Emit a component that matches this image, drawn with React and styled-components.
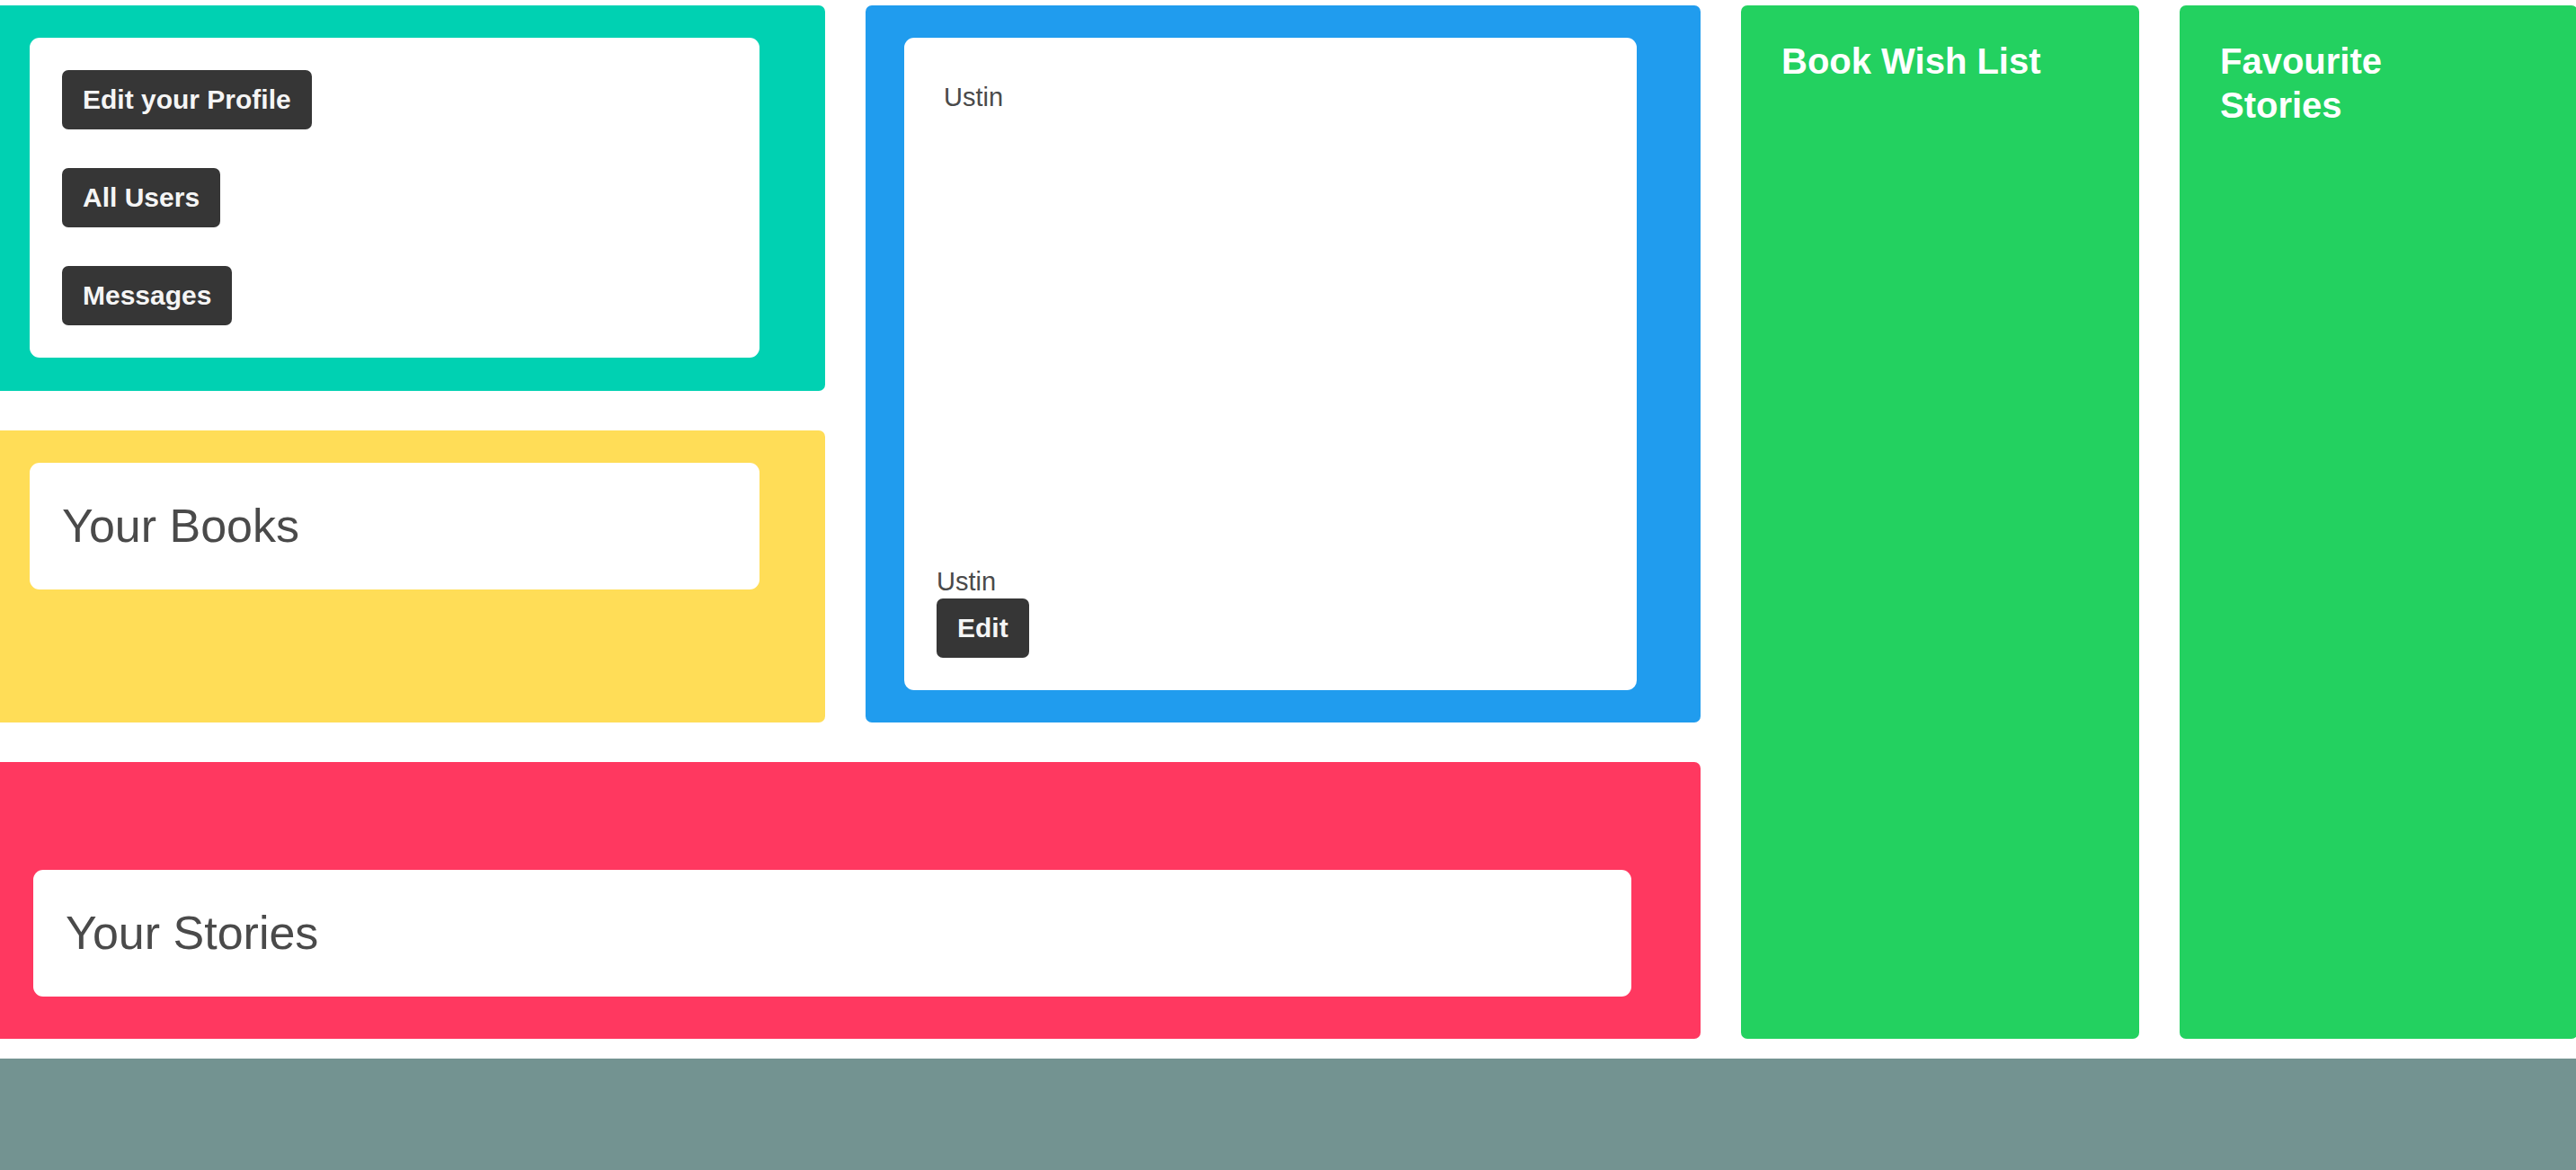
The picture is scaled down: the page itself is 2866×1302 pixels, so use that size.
import React from "react";
import styled, { createGlobalStyle } from "styled-components";

const GlobalStyle = createGlobalStyle`
  html, body {
    margin: 0;
    padding: 0;
    background: #ffffff;
    overflow: hidden;
  }
  body {
    font-family: "Liberation Sans", Arial, sans-serif;
    color: #4a4a4a;
  }
`;

const tones = {
  primary: "#00d1b2",
  warning: "#ffdd57",
  info: "#209cee",
  danger: "#ff3860",
  success: "#23d160",
};

function App() {
  return (
    <>
      <GlobalStyle />
      <Page>
        <Board>
          <Tile tone="primary" area="menu" pad="36px 73px 37px 44px">
            <Box>
              <ButtonStack>
                <DarkButton>Edit your Profile</DarkButton>
                <DarkButton>All Users</DarkButton>
                <DarkButton>Messages</DarkButton>
              </ButtonStack>
            </Box>
          </Tile>

          <Tile tone="warning" area="books" pad="36px 73px 37px 44px">
            <Box>
              <Heading>Your Books</Heading>
            </Box>
          </Tile>

          <Tile tone="info" area="profile" pad="36px 71px 36px 43px">
            <ProfileBox>
              <Avatar>Ustin</Avatar>
              <div>
                <Name>Ustin</Name>
                <DarkButton>Edit</DarkButton>
              </div>
            </ProfileBox>
          </Tile>

          <Tile tone="danger" area="stories" pad="120px 77px 47px 48px">
            <Box>
              <Heading>Your Stories</Heading>
            </Box>
          </Tile>

          <Tile tone="success" area="wish" pad="38px 45px">
            <TileTitle>Book Wish List</TileTitle>
          </Tile>

          <Tile tone="success" area="favs" pad="38px 45px">
            <TileTitle>Favourite Stories</TileTitle>
          </Tile>
        </Board>
        <Footer />
      </Page>
    </>
  );
}

const Page = styled.div`
  width: 100%;
  padding-top: 6px;
`;

const Board = styled.div`
  display: grid;
  margin-left: -11px;
  grid-template-columns: 929px 929px 443px 443px;
  grid-template-rows: 429px 325px 308px;
  column-gap: 45px;
  row-gap: 44px;
  grid-template-areas:
    "menu    profile wish favs"
    "books   profile wish favs"
    "stories stories wish favs";
`;

const Tile = styled.div`
  grid-area: ${(p) => p.area};
  background: ${(p) => tones[p.tone]};
  border-radius: 7px;
  padding: ${(p) => p.pad};
  display: flex;
  flex-direction: column;
  align-items: stretch;
  box-sizing: border-box;
  min-width: 0;
`;

const Box = styled.div`
  background: #ffffff;
  border-radius: 11px;
  padding: 36px;
  color: #4a4a4a;
`;

const ProfileBox = styled(Box)`
  flex: 1;
  display: flex;
  flex-direction: column;
  justify-content: space-between;
`;

const ButtonStack = styled.div`
  display: flex;
  flex-direction: column;
  align-items: flex-start;
  gap: 43px;
`;

const DarkButton = styled.button`
  display: inline-flex;
  align-items: center;
  justify-content: center;
  height: 66px;
  padding: 0 22px;
  border: 1px solid transparent;
  border-radius: 7px;
  background: #363636;
  color: #f5f5f5;
  font-family: "Liberation Sans", Arial, sans-serif;
  font-size: 30px;
  font-weight: 700;
  cursor: pointer;
`;

const Heading = styled.h2`
  margin: 0;
  font-size: 52px;
  font-weight: 400;
  line-height: 69px;
  color: #4a4a4a;
`;

const Avatar = styled.div`
  margin: 14px 0 0 8px;
  font-size: 29px;
  line-height: 33px;
`;

const Name = styled.div`
  font-size: 29px;
  line-height: 33px;
  margin-bottom: 2px;
`;

const TileTitle = styled.h3`
  margin: 0;
  max-width: 310px;
  color: #ffffff;
  font-size: 40px;
  font-weight: 700;
  line-height: 49px;
`;

const Footer = styled.footer`
  margin-top: 22px;
  height: 400px;
  background: radial-gradient(
      ellipse 60% 45% at 18% 100%,
      #6b8a88 0%,
      rgba(115, 146, 144, 0) 100%
    ),
    #739391;
`;

export default App;
